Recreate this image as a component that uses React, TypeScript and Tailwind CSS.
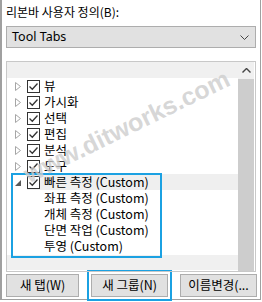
import React from "react";

const KR = { fontFamily: '"Noto Sans CJK KR", "Noto Sans", sans-serif' };

function Collapsed() {
  return (
    <svg width="6" height="9" viewBox="0 0 6 9" className="shrink-0">
      <path d="M0.5 0.5 L5.5 4.5 L0.5 8.5 Z" fill="none" stroke="#a6a6a6" strokeWidth="1" />
    </svg>
  );
}

function Expanded() {
  return (
    <svg width="6" height="9" viewBox="0 0 6 9" className="shrink-0">
      <path d="M6 2 L6 8 L0 8 Z" fill="#595959" />
    </svg>
  );
}

function Check() {
  return (
    <div className="w-[13px] h-[13px] border border-[#333] bg-white flex items-center justify-center shrink-0">
      <svg width="11" height="11" viewBox="0 0 11 11">
        <path d="M1.5 5.5 L4.3 8.3 L9.5 2.5" fill="none" stroke="#333" strokeWidth="1.3" />
      </svg>
    </div>
  );
}

function Row({ label, kind, highlight }: { label: string; kind: "c" | "e" | "child"; highlight?: boolean }) {
  return (
    <div className="h-[16px] flex items-center">
      <div className="w-[8px] shrink-0" />
      <div className="w-[6px] flex items-center shrink-0">
        {kind === "c" ? <Collapsed /> : kind === "e" ? <Expanded /> : null}
      </div>
      <div className="w-[6px] shrink-0" />
      <div className={`flex items-center h-[16px] flex-1 ${highlight ? "bg-[#efefef]" : ""}`}>
        <div className="w-[14px] flex items-center shrink-0">{kind !== "child" ? <Check /> : null}</div>
        <span className="pl-[3px] text-[12.5px] leading-[16px] text-black whitespace-nowrap" style={KR}>
          {label}
        </span>
      </div>
    </div>
  );
}

export default function App() {
  return (
    <div className="w-[262px] h-[302px] bg-white relative overflow-hidden">
      <div className="w-[261px] h-[300px] border-l-2 border-r border-b border-[#a0a0a0] pl-[4px] pr-[3px] flex flex-col">
        <div className="h-[26px] pt-[4px] text-[12px] leading-[16px] text-black" style={KR}>
          리본바 사용자 정의(B):
        </div>
        <div className="h-[22px] w-[250px] bg-[#e1e1e1] border border-[#adadad] flex items-center justify-between pl-[5px] pr-[6px]">
          <span className="text-[12.5px] text-black" style={{ fontFamily: '"Noto Sans", sans-serif' }}>
            Tool Tabs
          </span>
          <svg width="9" height="5" viewBox="0 0 9 5">
            <path d="M0.5 0.5 L4.5 4.5 L8.5 0.5" fill="none" stroke="#444" strokeWidth="1" />
          </svg>
        </div>
        <div className="h-[13px]" />
        <div className="h-[211px] w-[250px] border border-[#c8c8c8] flex relative">
          <div className="flex-1 flex flex-col">
            <div className="h-[16px] bg-[#f0f0f0]" />
            <Row label="뷰" kind="c" />
            <Row label="가시화" kind="c" />
            <Row label="선택" kind="c" />
            <Row label="편집" kind="c" />
            <Row label="분석" kind="c" />
            <Row label="도구" kind="c" />
            <div className="bg-white">
              <Row label="빠른 측정 (Custom)" kind="e" highlight />
            </div>
            <Row label="좌표 측정 (Custom)" kind="child" />
            <Row label="개체 측정 (Custom)" kind="child" />
            <Row label="단면 작업 (Custom)" kind="child" />
            <Row label="투영 (Custom)" kind="child" />
            <div className="h-[1px]" />
            <div className="h-[15px] bg-[#f0f0f0]" />
          </div>
          <div className="w-[16px] flex flex-col mr-[1px]">
            <div className="h-[17px] bg-[#f0f0f0] flex items-center justify-center">
              <svg width="9" height="5" viewBox="0 0 9 5">
                <path d="M0.5 4.5 L4.5 0.5 L8.5 4.5" fill="none" stroke="#444" strokeWidth="1.4" />
              </svg>
            </div>
            <div className="flex-1 bg-[#cdcdcd]" />
          </div>
          <div className="absolute left-[4px] top-[111px] w-[151px] h-[85px] border-2 border-[#1ba1e2] pointer-events-none" />
        </div>
        <div className="h-[2px]" />
        <div className="flex gap-[12px] h-[23px]">
          <button className="w-[74px] h-[23px] bg-[#e1e1e1] border border-[#adadad] text-[12.5px] text-black flex items-center justify-center" style={KR}>
            새 탭(W)
          </button>
          <button className="w-[78px] h-[23px] bg-[#e1e1e1] border border-[#adadad] text-[12.5px] text-black flex items-center justify-center outline-2 outline-[#1ba1e2] outline-offset-[2px]" style={KR}>
            새 그룹(N)
          </button>
          <button className="w-[78px] h-[23px] bg-[#e1e1e1] border border-[#adadad] text-[12.5px] text-black flex items-center justify-center" style={KR}>
            이름변경(...
          </button>
        </div>
      </div>
      <div
        className="absolute left-[14px] top-[108px] text-[25px] font-bold text-[rgba(205,205,205,0.8)] whitespace-nowrap pointer-events-none origin-center -rotate-[26deg]"
        style={{ fontFamily: '"Liberation Sans", sans-serif' }}
      >
        www.ditworks.com
      </div>
    </div>
  );
}
